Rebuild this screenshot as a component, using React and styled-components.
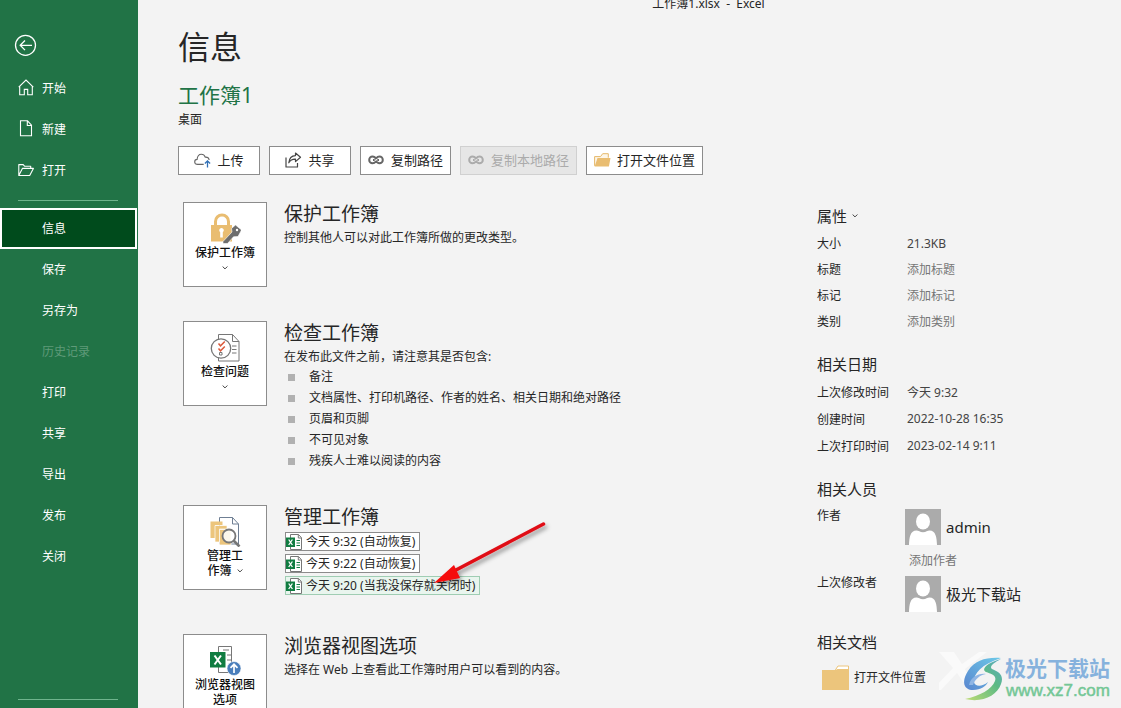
import React from "react";
import styled, { createGlobalStyle, css } from "styled-components";

const GlobalStyle = createGlobalStyle`
  * {
    box-sizing: border-box;
  }
  body {
    margin: 0;
    background: #f3f3f3;
    color: #262626;
    font-family: "Noto Sans", "Noto Sans CJK SC", sans-serif;
    font-size: 12px;
  }
  button,
  input {
    font: inherit;
    color: inherit;
  }
  h1, h2, h3, p, ul, dl, dd {
    margin: 0;
    padding: 0;
    font-weight: 400;
  }
  ul {
    list-style: none;
  }
  svg {
    display: block;
    flex: none;
  }
`;

const Shell = styled.div`
  position: relative;
  display: flex;
  height: 100vh;
  overflow: hidden;
`;

/* ---------- sidebar ---------- */

const Sidebar = styled.nav`
  display: flex;
  flex-direction: column;
  flex: none;
  width: 138px;
  padding: 34px 0 8px;
  background: #217346;
  color: #fff;
`;

const BackButton = styled.button`
  align-self: flex-start;
  margin: 0 0 12px 14px;
  padding: 0;
  border: 0;
  background: none;
`;

const NavItem = styled.a`
  display: flex;
  align-items: center;
  height: 41px;
  padding-bottom: 2px;
  padding-left: ${(p) => (p.$icon ? "18px" : "42px")};
  gap: 8px;
  color: ${(p) => (p.$disabled ? "#5f9a79" : "#fff")};
  text-decoration: none;
  ${(p) =>
    p.$active &&
    css`
      margin-right: 1px;
      padding-left: 40px;
      background: #004b1c;
      border: 2px solid #fff;
    `}
`;

const NavLine = styled.hr`
  width: 100px;
  height: 1px;
  margin: ${(p) => (p.$bottom ? "auto 0 0 18px" : "9px 0 7px 18px")};
  border: 0;
  background: #6fb48d;
`;

/* ---------- main area ---------- */

const Main = styled.main`
  flex: 1;
  min-width: 0;
`;

const TitleBar = styled.div`
  height: 8px;
  padding-left: 158px;
  line-height: 8px;
  text-align: center;
  white-space: pre;
`;

const Content = styled.div`
  padding: 18px 0 0 40px;
`;

const PageTitle = styled.h1`
  font-size: 32px;
  line-height: 42px;
`;

const FileName = styled.h2`
  margin-top: 12px;
  color: #217346;
  font-size: 21px;
  line-height: 30px;
`;

const FilePath = styled.p`
  line-height: 20px;
`;

const Toolbar = styled.div`
  display: flex;
  gap: 9px;
  margin-top: 16px;
`;

const ToolButton = styled.button`
  display: flex;
  align-items: center;
  justify-content: center;
  gap: 6px;
  height: 29px;
  min-width: 82px;
  padding: 0 7px 2px;
  border: 1px solid #8c8c8c;
  background: #fff;
  font-size: 13px;
  line-height: 18px;
  &:disabled {
    border-color: #d0d0d0;
    background: #e6e6e6;
    color: #ababab;
  }
`;

const Columns = styled.div`
  display: grid;
  grid-template-columns: 1fr 304px;
  margin-top: 27px;
`;

const Sections = styled.div`
  display: flex;
  flex-direction: column;
  gap: 34px;
  padding-left: 5px;
`;

const Section = styled.section`
  display: flex;
  align-items: flex-start;
  gap: 17px;
`;

const Tile = styled.button`
  display: flex;
  flex-direction: column;
  align-items: center;
  flex: none;
  gap: 1px;
  width: 84px;
  height: 85px;
  padding: 10px 0 0;
  border: 1px solid #8c8c8c;
  background: #fff;
  color: #111;
  font-weight: 500;
  line-height: 15px;
`;

const TileLabel = styled.span`
  display: flex;
  flex-wrap: wrap;
  align-items: center;
  justify-content: center;
  width: ${(p) => (p.$narrow ? "48px" : "60px")};
  column-gap: 5px;
`;

const TileMenuMark = styled.span`
  margin-top: 5px;
`;

const SectionTitle = styled.h2`
  font-size: 19px;
  line-height: 24px;
`;

const SectionText = styled.p`
  padding-top: 2px;
  line-height: 20px;
`;

const IssueList = styled.ul`
  display: grid;
  gap: 1px;
`;

const Issue = styled.li`
  display: flex;
  align-items: center;
  gap: 14px;
  padding-left: 4px;
  line-height: 20px;
  &::before {
    content: "";
    width: 7px;
    height: 7px;
    background: #b1b1b1;
  }
`;

const VersionList = styled.ul`
  display: grid;
  justify-items: start;
  gap: 3px;
  padding: 3px 0 5px;
`;

const Version = styled.button`
  display: flex;
  align-items: center;
  gap: 4px;
  height: 19px;
  margin-left: 1px;
  padding: 0 4px 0 0;
  border: 1px solid ${(p) => (p.$selected ? "#9fcdb3" : "#8c8c8c")};
  background: ${(p) => (p.$selected ? "#e9f5ee" : "#fff")};
  line-height: 16px;
  white-space: nowrap;
`;

/* ---------- property pane ---------- */

const Pane = styled.aside`
  display: flex;
  flex-direction: column;
  gap: 20px;
  padding-top: 4px;
`;

const PaneTitle = styled.h3`
  margin-bottom: 4px;
  font-size: 15px;
  line-height: 20px;
`;

const PaneMenu = styled.button`
  display: flex;
  align-items: center;
  gap: 5px;
  padding: 0;
  border: 0;
  background: none;
`;

const Field = styled.div`
  display: grid;
  grid-template-columns: 90px 1fr;
  align-items: center;
  height: ${(p) => (p.$loose ? "27px" : "26px")};
`;

const FieldValue = styled.dd`
  color: #444;
`;

const FieldInput = styled.input`
  width: 120px;
  padding: 0;
  border: 0;
  outline: 0;
  background: none;
  &::placeholder {
    color: #767676;
    opacity: 1;
  }
`;

const People = styled.div`
  display: grid;
  grid-template-columns: 88px 1fr;
  padding-top: 6px;
  line-height: 14px;
`;

const Person = styled.div`
  display: flex;
  align-items: center;
  gap: 5px;
  font-size: 15px;
  line-height: 20px;
`;

const AddPerson = styled(FieldInput)`
  grid-column: 2;
  height: 31px;
  margin-left: 4px;
`;

const FolderLink = styled.a`
  display: flex;
  align-items: center;
  gap: 5px;
  height: 26px;
  margin-top: 12px;
  padding-left: 5px;
  color: inherit;
  text-decoration: none;
`;

/* ---------- things lying over the page ---------- */

const PointerArrow = styled.svg`
  position: absolute;
  left: 429px;
  top: 516px;
`;

const Watermark = styled.div`
  position: absolute;
  right: 11px;
  bottom: 4px;
  display: flex;
  align-items: center;
  gap: 2px;
`;

const SiteName = styled.div`
  color: #86b2dd;
  font-size: 21px;
  font-weight: 700;
  line-height: 25px;
`;

const SiteUrl = styled.div`
  padding-left: 1px;
  color: #74c796;
  font-family: "Liberation Sans", Arial, sans-serif;
  font-size: 17px;
  line-height: 19px;
  -webkit-text-stroke: 0.5px #74c796;
`;

/* ---------- icons ---------- */

const BackIcon = () => (
  <svg width="23" height="22" viewBox="0 0 23 22" fill="none" stroke="#fff" strokeWidth="1.3">
    <circle cx="11.5" cy="11.3" r="10" />
    <path d="M18 11.3H6.5M11 6.5l-4.8 4.8 4.8 4.8" />
  </svg>
);

const HomeIcon = () => (
  <svg width="16" height="17" viewBox="0 0 16 17" fill="none" stroke="#fff" strokeWidth="1.1">
    <path d="M.7 8.2 8 1l7.3 7.2M1.7 7.4v8.4h4.6v-5.4h3.4v5.4h4.6V7.4" />
  </svg>
);

const NewIcon = () => (
  <svg width="16" height="17" viewBox="0 0 16 17" fill="none" stroke="#fff" strokeWidth="1.1">
    <path d="M2.5.8h7l4 4.4v10.6h-11zM9.3.8v4.7h4.2" />
  </svg>
);

const OpenIcon = () => (
  <svg width="16" height="14" viewBox="0 0 16 14" fill="none" stroke="#fff" strokeWidth="1.1" strokeLinejoin="round">
    <path d="M.8 12.5V1.6h4.4l1.3 1.6h6.2v2.2M.8 12.5l3.6-7.1h11l-3.7 7.1z" />
  </svg>
);

const CloudIcon = () => (
  <svg width="17" height="16" viewBox="0 0 17 16" fill="none" strokeWidth="1.1">
    <path stroke="#666" d="M9.7 12.4H3.6C1.9 12.4.7 11.4.7 9.9c0-1.4 1-2.4 2.4-2.5C3.4 4.4 5 2.3 7.3 2.3c2 0 3.3 1.2 3.9 2.8 2.3-.2 3.7 1.1 4 2.9" />
    <path stroke="#2f6fb5" strokeWidth="1.3" d="M13.5 15.5V9M10.9 11.5l2.6-2.6 2.6 2.6" />
  </svg>
);

const ShareIcon = () => (
  <svg width="17" height="16" viewBox="0 0 17 16" fill="none" stroke="#444" strokeWidth="1.2" strokeLinejoin="round">
    <path d="M1 5.500v9.500h11.500v-4M10.500 1l5 4.300-5 4.300V7.200C7.500 7 5.500 8 3.800 10.800 4.200 6.500 6.500 3.800 10.500 3.600z" />
  </svg>
);

const LinkIcon = ({ color = "#666" }) => (
  <svg width="17" height="10" viewBox="0 0 17 10" fill="none" stroke={color} strokeWidth="2">
    <path d="M7.500 6.800C6.800 7.900 5.800 8.200 4.500 8.200a3.300 3.300 0 0 1 0-6.600c1.800 0 2.800.800 3.700 2.600M8.500 3.100C9.200 2 10.200 1.600 11.500 1.600a3.300 3.300 0 0 1 0 6.600c-1.800 0-2.800-.800-3.700-2.600M5 4.900h1.700M9.300 4.900H11" />
  </svg>
);

const OpenFolderIcon = () => (
  <svg width="17" height="14" viewBox="0 0 17 14">
    <path d="M.6 12.800V3.600h5.900l2.200-2.900h5.600v4" fill="#fdf6e8" stroke="#e5b869" />
    <path d="M3.500 5h13l-1.600 8.500H.600z" fill="#e9bd71" />
  </svg>
);

const FolderIcon = () => (
  <svg width="27" height="25" viewBox="0 0 27 25">
    <path d="M13 5.500 16 1h10.500v6" fill="#fff" stroke="#ecc57c" />
    <path d="M0 5h13.500l2-1H27v21H0z" fill="#ecc57c" />
  </svg>
);

const Chevron = () => (
  <svg width="6" height="4" viewBox="0 0 6 4" fill="none" stroke="#444">
    <path d="M.6.500 3 2.900 5.400.500" />
  </svg>
);

const LockIcon = () => (
  <svg width="31" height="31" viewBox="0 0 31 31">
    <path d="M5.500 12V8.500a6.500 6.500 0 0 1 13 0V12" fill="none" stroke="#e9bd71" strokeWidth="3" />
    <path d="M1 12h21v16.500H1z" fill="#e9bd71" />
    <path d="M11.500 15a2.300 2.300 0 0 1 1.300 4.200v5.300h-2.600v-5.300A2.300 2.300 0 0 1 11.500 15z" fill="#fff" />
    <path d="M13 28.500 22 19l-.5-3.500 4-3.500 6 5-3.500 6.500-4.500.3-6 6.700H13z" fill="#6d6d6d" stroke="#fff" strokeWidth=".6" />
    <circle cx="27" cy="17" r="1.200" fill="#fff" />
  </svg>
);

const InspectIcon = () => (
  <svg width="31" height="31" viewBox="0 0 31 31" fill="none" stroke="#777">
    <path d="M8.500 2.500h14l6.500 7v19.500H8.500z" fill="#fff" />
    <path d="M22.500 2.500v7H29M22 14h4.500M22 17.500h4.500M22 21h4.500" />
    <circle cx="11" cy="16.500" r="9.700" fill="#fff" strokeWidth="1.300" />
    <path d="m8.500 11.500 2 2.300 4.300-4.300M8.500 16.500l2 2.300 4.300-4.300" stroke="#dc5a3c" strokeWidth="1.500" />
    <path d="M9.500 20.500h2.500v2.500H9.500z" />
  </svg>
);

const ManageIcon = () => (
  <svg width="31" height="31" viewBox="0 0 31 31" fill="none">
    <path d="M9.500 1.500h13l6 6.500v20h-19z" fill="#fff" stroke="#6f7f94" />
    <path d="M22.500 1.500V8h6" stroke="#6f7f94" />
    <path d="M.5 5.500h12V9H5v13H.5z" fill="#ecc57c" />
    <path d="M5 9.500h12V13H9.500v13H5z" fill="#ecc57c" stroke="#fff" strokeWidth=".7" />
    <path d="M9.500 13.500H21V29H9.500z" fill="#ecc57c" stroke="#fff" strokeWidth=".7" />
    <circle cx="19" cy="20" r="6.500" fill="#fff" fillOpacity=".85" stroke="#777" strokeWidth="1.800" />
    <path d="m23.500 24.500 6 6" stroke="#777" strokeWidth="2.600" />
  </svg>
);

const BrowserIcon = () => (
  <svg width="31" height="31" viewBox="0 0 31 31" fill="none">
    <path d="M8.500 1.500h13v26h-13z" fill="#fff" stroke="#777" />
    <path d="M13 5h6M17 10h4M17 15h4" stroke="#777" />
    <path d="M0 7h15.500v15.500H0z" fill="#107c41" />
    <path d="m4.500 10.500 6.500 9M11 10.500l-6.500 9" stroke="#fff" strokeWidth="2" />
    <circle cx="24" cy="23.500" r="7" fill="#4a7ebb" stroke="#fff" strokeWidth=".6" />
    <path d="M24 28v-8.500M20.500 22.800l3.500-3.500 3.500 3.500" stroke="#fff" strokeWidth="1.700" />
  </svg>
);

const SheetIcon = () => (
  <svg width="16" height="16" viewBox="0 0 16 16" fill="none">
    <path d="M4.500.500h8l3 3.200v11.800h-11z" fill="#fff" stroke="#777" />
    <path d="M12.300.500v3.500h3" stroke="#777" />
    <path d="M10.500 6.500H14M10.500 9H14M10.500 11.500H14" stroke="#107c41" />
    <path d="M0 3.500h9v9.500H0z" fill="#107c41" />
    <path d="m2.700 5.500 3.700 5.500M6.400 5.500 2.700 11" stroke="#fff" strokeWidth="1.300" />
  </svg>
);

const Avatar = () => (
  <svg width="36" height="36" viewBox="0 0 36 36">
    <path d="M0 0h36v36H0z" fill="#ababab" />
    <ellipse cx="18" cy="12.500" rx="7" ry="8" fill="#fff" />
    <path d="M4 36c.300-7.500 1.200-14.500 7.500-14.500 2 0 3.500 1.700 6.500 1.700s4.500-1.700 6.500-1.700c6.300 0 7.200 7 7.500 14.500z" fill="#fff" />
  </svg>
);

const SiteLogo = () => (
  <svg width="64" height="52" viewBox="0 0 64 52">
    <defs>
      <linearGradient id="swooshTop" x1="1" y1="0" x2="0" y2="1">
        <stop offset="0" stopColor="#6cc9e8" />
        <stop offset="1" stopColor="#5a86cf" />
      </linearGradient>
      <linearGradient id="swooshBottom" x1="1" y1="0" x2="0" y2="1">
        <stop offset="0" stopColor="#5aa9c9" />
        <stop offset=".4" stopColor="#5cba84" />
        <stop offset="1" stopColor="#c0dc74" />
      </linearGradient>
    </defs>
    <path d="M0 0h15l8 12L40 0h8L26 17l7 13h-9l-6-9L2 38l-9 0 21-22z" fill="#fff" opacity=".55" />
    <path d="M62 6C48 5 36 8 29 19c-7 11-4 19 5 19 8 0 13-4 15-8-6 5-13 5-14 0-1-8 8-18 27-24z" fill="url(#swooshTop)" />
    <path d="M30 33c2-8 9-12 17-11-6 1-11 5-13 11z" fill="#8fb5e4" />
    <path d="M62 7C50 10 41 17 47 20c5 2 11 3 9 9-3 8-15 15-30 18 17 4 32-3 36-15 3-8-1-12-9-15-3-2 1-6 9-10z" fill="url(#swooshBottom)" />
  </svg>
);

/* ---------- data ---------- */

const topNav = [
  { label: "开始", icon: <HomeIcon /> },
  { label: "新建", icon: <NewIcon /> },
  { label: "打开", icon: <OpenIcon /> },
];

const fileNav = [
  { label: "信息", active: true },
  { label: "保存" },
  { label: "另存为" },
  { label: "历史记录", disabled: true },
  { label: "打印" },
  { label: "共享" },
  { label: "导出" },
  { label: "发布" },
  { label: "关闭" },
];

const issues = [
  "备注",
  "文档属性、打印机路径、作者的姓名、相关日期和绝对路径",
  "页眉和页脚",
  "不可见对象",
  "残疾人士难以阅读的内容",
];

const versions = [
  "今天 9:32 (自动恢复)",
  "今天 9:22 (自动恢复)",
  "今天 9:20 (当我没保存就关闭时)",
];

const editable = [
  { id: "title", label: "标题", hint: "添加标题" },
  { id: "tags", label: "标记", hint: "添加标记" },
  { id: "category", label: "类别", hint: "添加类别" },
];

const dates = [
  ["上次修改时间", "今天 9:32"],
  ["创建时间", "2022-10-28 16:35"],
  ["上次打印时间", "2023-02-14 9:11"],
];

export default function App() {
  return (
    <Shell>
      <GlobalStyle />
      <Sidebar>
        <BackButton aria-label="返回">
          <BackIcon />
        </BackButton>
        {topNav.map((item) => (
          <NavItem key={item.label} href="#" $icon>
            {item.icon}
            {item.label}
          </NavItem>
        ))}
        <NavLine />
        {fileNav.map((item) => (
          <NavItem key={item.label} href="#" $active={item.active} $disabled={item.disabled}>
            {item.label}
          </NavItem>
        ))}
        <NavLine $bottom />
      </Sidebar>

      <Main>
        <TitleBar>工作簿1.xlsx  -  Excel</TitleBar>
        <Content>
          <PageTitle>信息</PageTitle>
          <FileName>工作簿1</FileName>
          <FilePath>桌面</FilePath>
          <Toolbar>
            <ToolButton>
              <CloudIcon />
              上传
            </ToolButton>
            <ToolButton>
              <ShareIcon />
              共享
            </ToolButton>
            <ToolButton>
              <LinkIcon />
              复制路径
            </ToolButton>
            <ToolButton disabled>
              <LinkIcon color="#ababab" />
              复制本地路径
            </ToolButton>
            <ToolButton>
              <OpenFolderIcon />
              打开文件位置
            </ToolButton>
          </Toolbar>

          <Columns>
            <Sections>
              <Section>
                <Tile>
                  <LockIcon />
                  <TileLabel>保护工作簿</TileLabel>
                  <TileMenuMark>
                    <Chevron />
                  </TileMenuMark>
                </Tile>
                <div>
                  <SectionTitle>保护工作簿</SectionTitle>
                  <SectionText>控制其他人可以对此工作簿所做的更改类型。</SectionText>
                </div>
              </Section>

              <Section>
                <Tile>
                  <InspectIcon />
                  <TileLabel>检查问题</TileLabel>
                  <TileMenuMark>
                    <Chevron />
                  </TileMenuMark>
                </Tile>
                <div>
                  <SectionTitle>检查工作簿</SectionTitle>
                  <SectionText>在发布此文件之前，请注意其是否包含:</SectionText>
                  <IssueList>
                    {issues.map((issue) => (
                      <Issue key={issue}>{issue}</Issue>
                    ))}
                  </IssueList>
                </div>
              </Section>

              <Section>
                <Tile>
                  <ManageIcon />
                  <TileLabel $narrow>
                    <span>管理工</span>
                    <span>作簿</span>
                    <Chevron />
                  </TileLabel>
                </Tile>
                <div>
                  <SectionTitle>管理工作簿</SectionTitle>
                  <VersionList>
                    {versions.map((version, i) => (
                      <li key={version}>
                        <Version $selected={i === 2}>
                          <SheetIcon />
                          {version}
                        </Version>
                      </li>
                    ))}
                  </VersionList>
                </div>
              </Section>

              <Section>
                <Tile>
                  <BrowserIcon />
                  <TileLabel>浏览器视图选项</TileLabel>
                </Tile>
                <div>
                  <SectionTitle>浏览器视图选项</SectionTitle>
                  <SectionText>选择在 Web 上查看此工作簿时用户可以看到的内容。</SectionText>
                </div>
              </Section>
            </Sections>

            <Pane>
              <div>
                <PaneTitle>
                  <PaneMenu>
                    属性
                    <Chevron />
                  </PaneMenu>
                </PaneTitle>
                <Field as="dl">
                  <dt>大小</dt>
                  <FieldValue>21.3KB</FieldValue>
                </Field>
                {editable.map((field) => (
                  <Field key={field.id}>
                    <label htmlFor={field.id}>{field.label}</label>
                    <FieldInput id={field.id} placeholder={field.hint} />
                  </Field>
                ))}
              </div>

              <div>
                <PaneTitle>相关日期</PaneTitle>
                {dates.map(([label, value]) => (
                  <Field as="dl" key={label} $loose>
                    <dt>{label}</dt>
                    <FieldValue>{value}</FieldValue>
                  </Field>
                ))}
              </div>

              <div>
                <PaneTitle>相关人员</PaneTitle>
                <People>
                  <label htmlFor="author">作者</label>
                  <Person>
                    <Avatar />
                    admin
                  </Person>
                  <AddPerson id="author" placeholder="添加作者" />
                  <span>上次修改者</span>
                  <Person>
                    <Avatar />
                    极光下载站
                  </Person>
                </People>
              </div>

              <div>
                <PaneTitle>相关文档</PaneTitle>
                <FolderLink href="#">
                  <FolderIcon />
                  打开文件位置
                </FolderLink>
              </div>
            </Pane>
          </Columns>
        </Content>
      </Main>

      <PointerArrow width="130" height="85" viewBox="0 0 130 85">
        <defs>
          <filter id="arrowShadow" x="-20%" y="-20%" width="140%" height="150%">
            <feDropShadow dx="2" dy="3" stdDeviation="2" floodColor="#000" floodOpacity=".4" />
          </filter>
        </defs>
        <g filter="url(#arrowShadow)">
          <path d="M114.500 8 27 54" stroke="#e00b14" strokeWidth="3.500" strokeLinecap="round" />
          <path d="M5 67 25 49l2.500 5.500L31 62z" fill="#f5080c" />
        </g>
      </PointerArrow>

      <Watermark>
        <SiteLogo />
        <div>
          <SiteName>极光下载站</SiteName>
          <SiteUrl>www.xz7.com</SiteUrl>
        </div>
      </Watermark>
    </Shell>
  );
}
